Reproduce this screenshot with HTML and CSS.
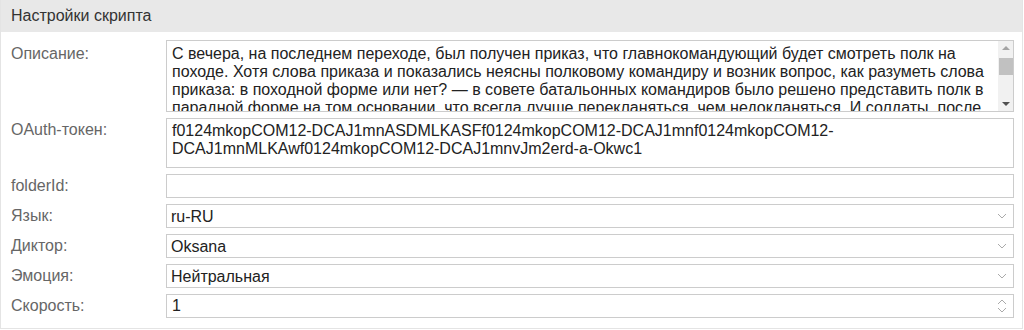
FILE: index.html
```html
<!DOCTYPE html>
<html lang="ru">
<head>
    <meta charset="UTF-8">
    <meta name="viewport" content="width=device-width, initial-scale=1.0">
    <title>Настройки скрипта</title>
    <link rel="stylesheet" href="styles.css">
</head>
<body>
    <div class="panel">
        <div class="panel-header">Настройки скрипта</div>
        <div class="form">
            <label class="label label-top label-desc" for="desc">Описание:</label>
            <div class="area-wrap">
                <textarea id="desc" class="field area-desc">С вечера, на последнем переходе, был получен приказ, что главнокомандующий будет смотреть полк на походе. Хотя слова приказа и показались неясны полковому командиру и возник вопрос, как разуметь слова приказа: в походной форме или нет? — в совете батальонных командиров было решено представить полк в парадной форме на том основании, что всегда лучше перекланяться, чем недокланяться. И солдаты, после тридцативерстного перехода, не смыкали глаз, всю ночь чинились, чистились; адъютанты и ротные рассчитывали, отчисляли; и к утру полк, вместо растянутой беспорядочной толпы, какою он был накануне на последнем переходе, представлял стройную массу 2000 людей, из которых каждый знал свое место, свое дело и из которых на каждом каждая пуговка и ремешок были на своем месте и блестели чистотой.</textarea>
                <div class="scrollbar">
                    <span class="arrow-up"></span>
                    <span class="thumb"></span>
                    <span class="arrow-down"></span>
                </div>
            </div>

            <label class="label label-top" for="token">OAuth-токен:</label>
            <textarea id="token" class="field area-token">f0124mkopCOM12-DCAJ1mnASDMLKASFf0124mkopCOM12-DCAJ1mnf0124mkopCOM12-DCAJ1mnMLKAwf0124mkopCOM12-DCAJ1mnvJm2erd-a-Okwc1</textarea>

            <label class="label" for="folder">folderId:</label>
            <input id="folder" class="field input" type="text" value="">

            <label class="label" for="lang">Язык:</label>
            <div class="select-wrap">
                <select id="lang" class="field select">
                    <option>ru-RU</option>
                </select>
                <svg class="chevron" width="10" height="6" viewBox="0 0 10 6"><path d="M1 1l4 4 4-4" fill="none" stroke="#aaa" stroke-width="1"/></svg>
            </div>

            <label class="label" for="voice">Диктор:</label>
            <div class="select-wrap">
                <select id="voice" class="field select">
                    <option>Oksana</option>
                </select>
                <svg class="chevron" width="10" height="6" viewBox="0 0 10 6"><path d="M1 1l4 4 4-4" fill="none" stroke="#aaa" stroke-width="1"/></svg>
            </div>

            <label class="label" for="emotion">Эмоция:</label>
            <div class="select-wrap">
                <select id="emotion" class="field select">
                    <option>Нейтральная</option>
                </select>
                <svg class="chevron" width="10" height="6" viewBox="0 0 10 6"><path d="M1 1l4 4 4-4" fill="none" stroke="#aaa" stroke-width="1"/></svg>
            </div>

            <label class="label" for="speed">Скорость:</label>
            <div class="select-wrap">
                <input id="speed" class="field input" type="text" value="1">
                <svg class="spinner" width="10" height="14" viewBox="0 0 10 14"><path d="M1 5l4-4 4 4M1 9l4 4 4-4" fill="none" stroke="#aaa" stroke-width="1"/></svg>
            </div>
        </div>
    </div>
</body>
</html>
```

FILE: styles.css
```css
body {
    margin: 0;
    font-family: "Liberation Sans", Arial, sans-serif;
    font-size: 16px;
    background-color: #ffffff;
    color: #222222;
}
.panel {
    width: 1023px;
    box-sizing: border-box;
    border: 1px solid #e4e4e4;
    border-top: none;
}
.panel-header {
    height: 32px;
    line-height: 32px;
    padding-left: 10px;
    background-color: #e8e8e8;
    color: #333333;
}
.form {
    display: grid;
    grid-template-columns: 165px 1fr;
    row-gap: 6px;
    padding: 8px 8px 10px 0;
}
.label {
    padding-left: 10px;
    line-height: 24px;
    color: #666666;
}
.label-top {
    line-height: 18px;
    padding-top: 3px;
}
.label-desc {
    padding-top: 5px;
}
.field {
    display: block;
    width: 100%;
    box-sizing: border-box;
    margin: 0;
    border: 1px solid #cccccc;
    border-radius: 0;
    background-color: #ffffff;
    font-family: "Liberation Sans", Arial, sans-serif;
    font-size: 16px;
    color: #222222;
    outline: none;
}
textarea.field {
    resize: none;
    line-height: 18px;
    padding: 2px 5px;
    overflow: hidden;
}
.area-wrap {
    position: relative;
}
textarea.area-desc {
    height: 72px;
    padding-top: 4px;
    padding-right: 22px;
}
textarea.area-token {
    height: 50px;
    padding-top: 3px;
}
.scrollbar {
    position: absolute;
    top: 1px;
    right: 1px;
    bottom: 1px;
    width: 15px;
    background-color: #f1f1f1;
}
.arrow-up,
.arrow-down {
    position: absolute;
    left: 4px;
    width: 0;
    height: 0;
    border-left: 4px solid transparent;
    border-right: 4px solid transparent;
}
.arrow-up {
    top: 5px;
    border-bottom: 4px solid #a3a3a3;
}
.arrow-down {
    bottom: 5px;
    border-top: 4px solid #505050;
}
.thumb {
    position: absolute;
    top: 17px;
    left: 1px;
    right: 0;
    height: 17px;
    background-color: #c1c1c1;
}
.input {
    height: 24px;
    padding: 0 5px;
}
.select {
    height: 24px;
    padding: 0 4px;
    appearance: none;
    -webkit-appearance: none;
}
.select-wrap {
    position: relative;
}
.chevron {
    position: absolute;
    right: 7px;
    top: 9px;
    pointer-events: none;
}
.spinner {
    position: absolute;
    right: 7px;
    top: 5px;
    pointer-events: none;
}
```
